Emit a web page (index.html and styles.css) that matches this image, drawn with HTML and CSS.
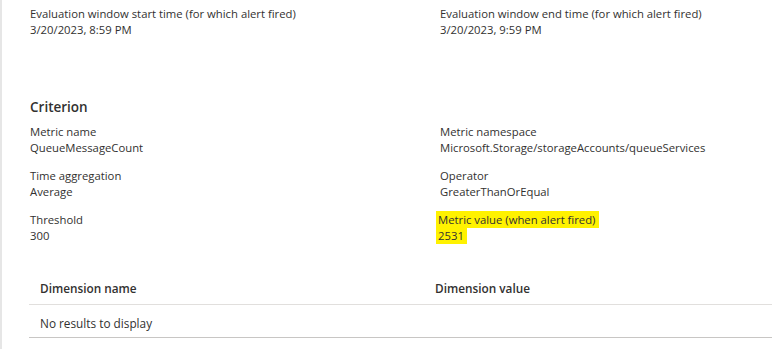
FILE: index.html
```html
<!DOCTYPE html>
<html lang="en">
<head>
  <meta charset="UTF-8" />
  <title>Alert details</title>
  <link rel="stylesheet" href="styles.css">
</head>
<body>
  <div class="page">
    <div class="grid top">
      <div class="field">
        <div class="label">Evaluation window start time (for which alert fired)</div>
        <div class="value">3/20/2023, 8:59 PM</div>
      </div>
      <div class="field">
        <div class="label">Evaluation window end time (for which alert fired)</div>
        <div class="value">3/20/2023, 9:59 PM</div>
      </div>
    </div>

    <h3 class="section-title">Criterion</h3>

    <div class="grid">
      <div class="field">
        <div class="label">Metric name</div>
        <div class="value">QueueMessageCount</div>
      </div>
      <div class="field">
        <div class="label">Metric namespace</div>
        <div class="value">Microsoft.Storage/storageAccounts/queueServices</div>
      </div>
      <div class="field">
        <div class="label">Time aggregation</div>
        <div class="value">Average</div>
      </div>
      <div class="field">
        <div class="label">Operator</div>
        <div class="value">GreaterThanOrEqual</div>
      </div>
      <div class="field">
        <div class="label">Threshold</div>
        <div class="value">300</div>
      </div>
      <div class="field highlight">
        <div class="label"><span class="mark wide">Metric value (when alert fired)</span></div>
        <div class="value"><span class="mark">2531</span></div>
      </div>
    </div>

    <table class="dims">
      <thead>
        <tr>
          <th class="col-name">Dimension name</th>
          <th>Dimension value</th>
        </tr>
      </thead>
      <tbody>
        <tr>
          <td colspan="2">No results to display</td>
        </tr>
      </tbody>
    </table>
  </div>
</body>
</html>
```

FILE: styles.css
```css
html, body {
  margin: 0;
  padding: 0;
  background: #ffffff;
}

body {
  font-family: "Open Sans", "Noto Sans", Arial, sans-serif;
  font-size: 11.3px;
  color: #323130;
  border-left: 2px solid #e6e6e6;
  min-height: 349px;
  box-sizing: border-box;
}

.page {
  padding: 6px 0 0 28px;
}

.grid {
  display: grid;
  grid-template-columns: 410px 1fr;
  row-gap: 12px;
}

.label,
.value {
  line-height: 16px;
  white-space: nowrap;
}

.section-title {
  margin: 59px 0 7px;
  font-size: 13.5px;
  font-weight: 600;
  line-height: 20px;
}

.mark {
  background: #fff200;
  padding: 1px 3px 1px 2px;
  margin-left: -4px;
}

.mark.wide {
  padding-right: 4px;
}

.dims {
  width: 100%;
  border-collapse: collapse;
  margin-top: 28px;
  margin-left: -1px;
}

.dims th,
.dims td {
  text-align: left;
  padding: 0 11px;
  font-size: 11.8px;
  line-height: 16px;
}

.dims th {
  font-weight: 600;
  color: #323130;
  height: 32px;
  border-bottom: 1px solid #e1dfdd;
}

.dims th.col-name {
  width: 373px;
}

.dims td {
  padding-top: 10px;
  padding-bottom: 6px;
  color: #323130;
  border-bottom: 1px solid #c8c6c4;
}
```
